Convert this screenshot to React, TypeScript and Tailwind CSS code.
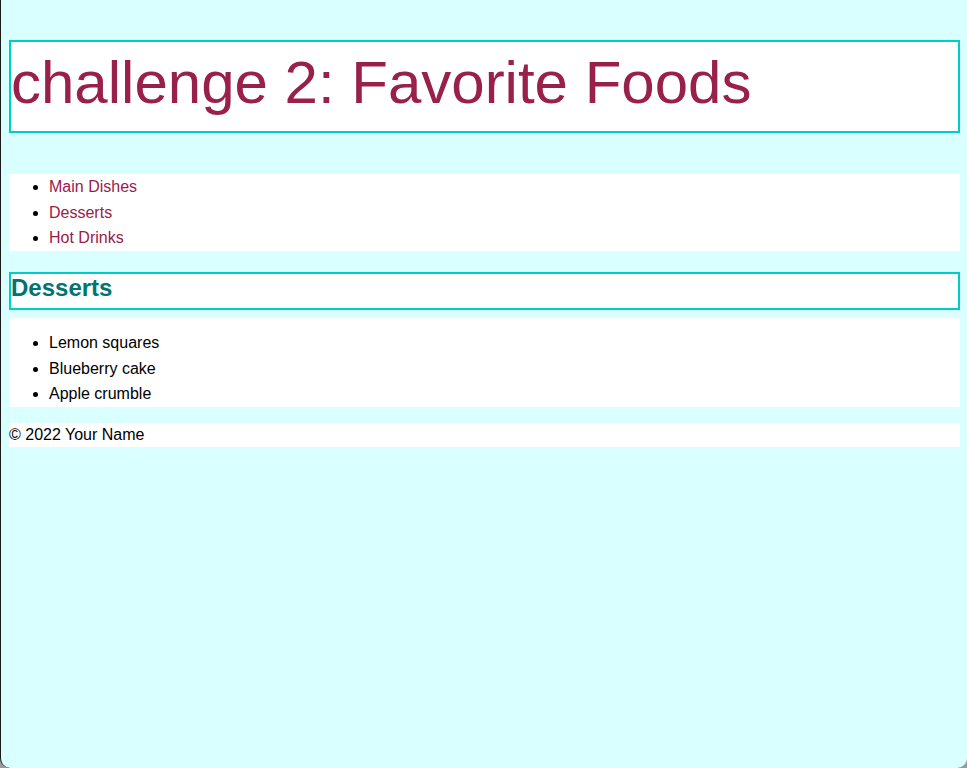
export default function App() {
  const navItems = ["Main Dishes", "Desserts", "Hot Drinks"];
  const desserts = ["Lemon squares", "Blueberry cake", "Apple crumble"];
  return (
    <div className="h-[768px] w-[967px] bg-[#9a9a9a] overflow-hidden">
      <div
        className="h-[768px] w-[967px] overflow-hidden rounded-b-[10px] border-l border-[#1a1a1a] bg-[#d9ffff] px-[8px] pt-[40px] text-black"
        style={{ fontFamily: '"Liberation Sans", Arial, Helvetica, sans-serif' }}
      >
        <header className="w-[951px] border-2 border-[#00cccc] bg-white">
          <h1 className="pt-[6px] pb-[14px] text-[60px] leading-[69px] font-normal text-[#99204a]">
            challenge 2: Favorite Foods
          </h1>
        </header>
        <nav className="mt-[41px] w-[951px] bg-white">
          <ul className="list-disc pl-[40px] text-[16px] leading-[25.5px]">
            {navItems.map((item) => (
              <li key={item}>
                <a className="text-[#99204a]" href="#">
                  {item}
                </a>
              </li>
            ))}
          </ul>
        </nav>
        <section className="mt-[21px] w-[951px]">
          <h2 className="border-2 border-[#00cccc] bg-white pb-[6px] text-[24px] leading-[28px] font-bold text-[#007373]">
            Desserts
          </h2>
          <ul className="mt-[8px] list-disc bg-white pl-[40px] pt-[12.5px] text-[16px] leading-[25.5px]">
            {desserts.map((item) => (
              <li key={item}>{item}</li>
            ))}
          </ul>
        </section>
        <footer className="mt-[16px] w-[951px] bg-white text-[16px] leading-[24px]">
          © 2022 Your Name
        </footer>
      </div>
    </div>
  );
}
